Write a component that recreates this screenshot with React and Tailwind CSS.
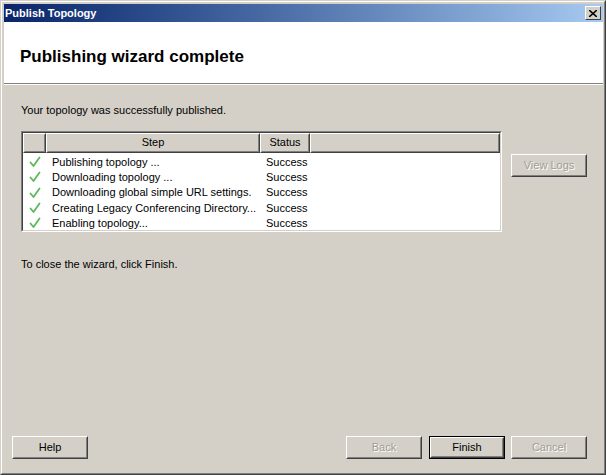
import React from "react";

const rows = [
  "Publishing topology ...",
  "Downloading topology ...",
  "Downloading global simple URL settings.",
  "Creating Legacy Conferencing Directory...",
  "Enabling topology...",
];

// classic raised 3d button
const Button = ({ label, disabled, isDefault, className = "" }) => {
  const inner = (
    <div className="h-full w-full border border-t-white border-l-white border-r-[#404040] border-b-[#404040]">
      <div className="h-full w-full border border-t-[#d4d0c8] border-l-[#d4d0c8] border-r-[#808080] border-b-[#808080] flex items-center justify-center">
        <span
          className={
            disabled
              ? "text-[#a09c94] [text-shadow:1px_1px_0_#ffffff]"
              : "text-black"
          }
        >
          {label}
        </span>
      </div>
    </div>
  );
  return (
    <div
      className={`h-[23px] w-[76px] bg-[#d4d0c8] ${
        isDefault ? "border border-black" : ""
      } ${className}`}
    >
      {inner}
    </div>
  );
};

const Check = () => (
  <svg width="12" height="12" viewBox="0 0 12 12">
    <path
      d="M1.5 6.5 L4.5 10 L10.5 1.5"
      fill="none"
      stroke="#5cb85c"
      strokeWidth="1.8"
      strokeLinecap="round"
      strokeLinejoin="round"
    />
  </svg>
);

const HeaderCell = ({ children, className = "" }) => (
  <div
    className={`h-[20px] border border-t-white border-l-white border-r-[#404040] border-b-[#404040] ${className}`}
  >
    <div className="h-full border border-t-[#d4d0c8] border-l-[#d4d0c8] border-r-[#808080] border-b-[#808080] flex items-center justify-center">
      {children}
    </div>
  </div>
);

export default function App() {
  return (
    <div
      className="w-[606px] h-[475px] bg-[#d4d0c8] text-[11px] text-black overflow-hidden"
      style={{ fontFamily: '"Liberation Sans", Arial, sans-serif' }}
    >
      <div className="h-full w-full border border-t-[#d4d0c8] border-l-[#d4d0c8] border-r-[#404040] border-b-[#404040]">
        <div className="h-full w-full border border-t-white border-l-white border-r-[#808080] border-b-[#808080] pt-[2px] pl-[2px] pr-[1px] pb-[1px] flex flex-col">
          {/* title bar */}
          <div className="h-[18px] flex items-center justify-between pl-[1px] pr-[2px] bg-gradient-to-r from-[#0a246a] to-[#a6caf0]">
            <span className="text-white font-bold text-[11px]">
              Publish Topology
            </span>
            <div className="w-[16px] h-[14px] bg-[#d4d0c8] border border-t-white border-l-white border-r-[#404040] border-b-[#404040] flex items-center justify-center">
              <svg width="8" height="7" viewBox="0 0 8 7">
                <path d="M0 0 L8 7 M8 0 L0 7" stroke="black" strokeWidth="1.6" />
              </svg>
            </div>
          </div>

          {/* header panel */}
          <div className="h-[62px] bg-white flex items-center pl-[16px] border-b border-[#808080]">
            <span className="font-bold text-[17px] mt-[8px]">
              Publishing wizard complete
            </span>
          </div>
          <div className="h-px bg-white"></div>

          {/* body */}
          <div className="flex-1 flex flex-col pl-[17px] pr-[16px]">
            <div className="mt-[17px]">Your topology was successfully published.</div>

            <div className="flex mt-[12px]">
              <div className="w-[481px] h-[101px] border border-t-[#808080] border-l-[#808080] border-r-white border-b-white">
                <div className="h-full border border-t-[#404040] border-l-[#404040] border-r-[#d4d0c8] border-b-[#d4d0c8] bg-white flex flex-col">
                  <div className="flex bg-[#d4d0c8]">
                    <HeaderCell className="w-[23px]" />
                    <HeaderCell className="w-[214px]">Step</HeaderCell>
                    <HeaderCell className="w-[50px]">Status</HeaderCell>
                    <HeaderCell className="flex-1" />
                  </div>
                  <div className="flex flex-col pt-[2px]">
                    {rows.map((r) => (
                      <div key={r} className="h-[15.25px] flex items-center">
                        <div className="w-[23px] flex justify-center pl-[1px]">
                          <Check />
                        </div>
                        <div className="w-[214px] pl-[6px] whitespace-nowrap">{r}</div>
                        <div className="pl-[6px]">Success</div>
                      </div>
                    ))}
                  </div>
                </div>
              </div>
              <Button label="View Logs" disabled className="ml-[9px] mt-[23px]" />
            </div>

            <div className="mt-[24px]">To close the wizard, click Finish.</div>

            <div className="flex-1"></div>

            <div className="flex items-center mb-[13px] -ml-[9px]">
              <Button label="Help" />
              <div className="flex-1"></div>
              <Button label="Back" disabled />
              <Button label="Finish" isDefault className="ml-[7px]" />
              <Button label="Cancel" disabled className="ml-[6px]" />
            </div>
          </div>
        </div>
      </div>
    </div>
  );
}
